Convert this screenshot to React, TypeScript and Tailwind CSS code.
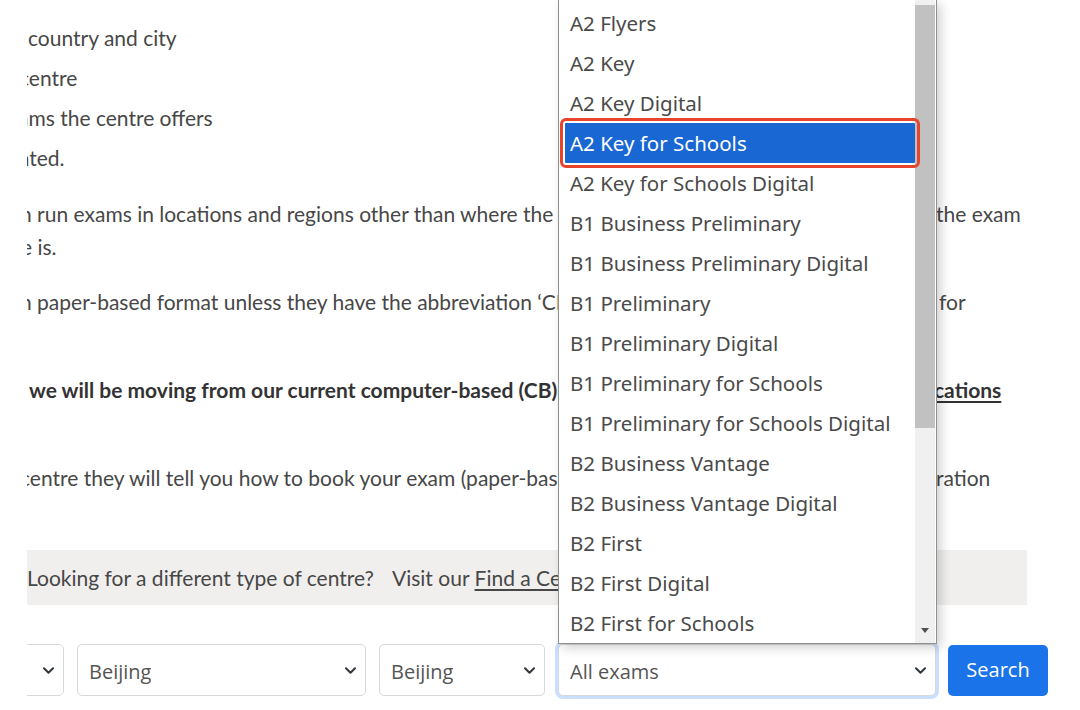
import React from "react";

const exams = [
  "A2 Flyers",
  "A2 Key",
  "A2 Key Digital",
  "A2 Key for Schools",
  "A2 Key for Schools Digital",
  "B1 Business Preliminary",
  "B1 Business Preliminary Digital",
  "B1 Preliminary",
  "B1 Preliminary Digital",
  "B1 Preliminary for Schools",
  "B1 Preliminary for Schools Digital",
  "B2 Business Vantage",
  "B2 Business Vantage Digital",
  "B2 First",
  "B2 First Digital",
  "B2 First for Schools",
];

function Chevron() {
  return (
    <svg width="13" height="9" viewBox="0 0 16 12" fill="none" className="shrink-0">
      <path d="M2 3l6 6 6-6" stroke="#343a40" strokeWidth="2.8" strokeLinecap="round" strokeLinejoin="round" />
    </svg>
  );
}

function Select({ label, className }: { label: string; className: string }) {
  return (
    <div className={`flex items-center justify-between h-[52px] rounded-[5px] border border-[#d6d9dc] bg-white pl-[11px] pr-[8px] shrink-0 ${className}`}>
      <span className="truncate pt-[3px]">{label}</span>
      <Chevron />
    </div>
  );
}

export default function App() {
  return (
    <div className="relative w-[1080px] h-[710px] overflow-hidden bg-white flex font-[Lato,sans-serif] text-[21px] text-[#474747]">
      <div className="w-[27px] shrink-0" />

      <div className="flex-1 overflow-hidden">
        {/* steps list */}
        <ul className="pt-[18px]">
          <li className="h-[40px] leading-[40px] whitespace-nowrap ml-[1px]">country and city</li>
          <li className="h-[40px] leading-[40px] whitespace-nowrap -ml-[8px]">centre</li>
          <li className="h-[40px] leading-[40px] whitespace-nowrap -ml-[9px]">ams the centre offers</li>
          <li className="h-[40px] leading-[40px] whitespace-nowrap -ml-[8px]">ated.</li>
        </ul>

        {/* paragraphs */}
        <div className="w-[1000px] mt-[19px] flex flex-col gap-[22px] leading-[33px]">
          <div>
            <div className="flex whitespace-nowrap">
              <div className="w-[909px] shrink-0 overflow-hidden">
                <div className="-ml-[7px]">n run exams in locations and regions other than where the centre is based. Please check with the centre where</div>
              </div>
              <span className="ml-[0px]">the exam</span>
            </div>
            <div className="whitespace-nowrap -ml-[6px]">e is.</div>
          </div>

          <div>
            <div className="flex whitespace-nowrap">
              <div className="w-[909px] shrink-0 overflow-hidden">
                <div className="-ml-[7px]">n paper-based format unless they have the abbreviation ‘CB’ (computer-based) shown next to them</div>
              </div>
              <span className="ml-[3px]">for</span>
            </div>
            <div className="h-[33px]" />
          </div>

          <div className="font-bold text-[#333]">
            <div className="flex whitespace-nowrap">
              <div className="w-[907px] shrink-0 overflow-hidden">
                <div className="ml-[2px]">we will be moving from our current computer-based (CB) exams to our new digital qualifi</div>
              </div>
              <span className="underline underline-offset-[3px]">cations</span>
            </div>
            <div className="h-[33px]" />
          </div>

          <div>
            <div className="flex whitespace-nowrap">
              <div className="w-[909px] shrink-0 overflow-hidden">
                <div className="-ml-[7px]">centre they will tell you how to book your exam (paper-based or computer-based) and explain the regist</div>
              </div>
              <span>ration</span>
            </div>
            <div className="h-[33px]" />
          </div>
        </div>

        {/* other centre types */}
        <div className="w-[1000px] mt-[23px] h-[55px] bg-[#f0efee] flex items-center whitespace-nowrap">
          <span>Looking for a different type of centre?</span>
          <span className="ml-[18px]">Visit our</span>
          <span className="ml-[5px] underline underline-offset-[3px]">Find a Centre page</span>
        </div>

        {/* search form */}
        <div className="mt-[39px] flex gap-[13px] items-center font-['Open_Sans',sans-serif] text-[20px] text-[#555]">
          <div className="w-[37px] overflow-hidden shrink-0 flex justify-end">
            <Select label="China" className="w-[150px]" />
          </div>
          <Select label="Beijing" className="w-[289px]" />
          <Select label="Beijing" className="w-[166px]" />
          <Select label="All exams" className="w-[378px] border-[#86b7fe] shadow-[0_0_0_3px_rgba(13,110,253,0.22)]" />
          <button className="ml-[-1px] w-[100px] h-[51px] rounded-[5px] bg-[#1a73e8] text-white text-[20px] shrink-0">Search</button>
        </div>
      </div>

      {/* open dropdown list */}
      <div className="absolute left-[558px] top-0 w-[379px] h-[644px] bg-white border-l border-r border-b border-[#8f8f8f] shadow-[4px_4px_10px_rgba(0,0,0,0.18)] flex font-['Noto_Sans',sans-serif] text-[20.5px] text-[#4a4a4a]">
        <ul className="flex-1 pt-[3px]">
          {exams.map((exam) => (
            <li
              key={exam}
              className={
                exam === "A2 Key for Schools"
                  ? "relative h-[40px] leading-[40px] ml-[6px] pl-[5px] bg-[#1967d2] text-white outline outline-[3px] outline-[#e8432b] outline-offset-[2px] rounded-[1px]"
                  : "h-[40px] leading-[40px] pl-[11px] whitespace-nowrap"
              }
            >
              {exam}
            </li>
          ))}
        </ul>
        <div className="w-[20px] mr-[1px] bg-[#f0f0f0] flex flex-col justify-between items-center">
          <div className="w-[20px] mt-[5px] h-[423px] bg-[#c1c1c1]" />
          <svg width="10" height="6" viewBox="0 0 10 6" className="mb-[9px]">
            <path d="M1 0h8L5 5z" fill="#505050" />
          </svg>
        </div>
      </div>
    </div>
  );
}
